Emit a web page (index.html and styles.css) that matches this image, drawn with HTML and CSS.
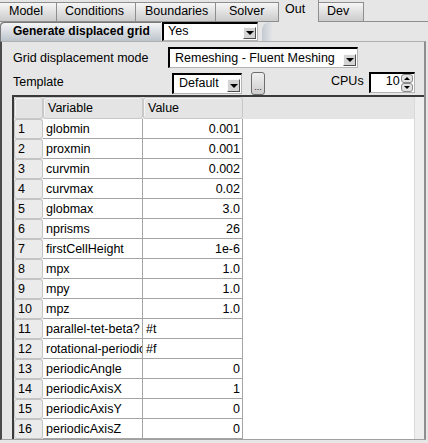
FILE: index.html
```html
<!DOCTYPE html>
<html>
<head>
<meta charset="utf-8">
<title>Out</title>
<link rel="stylesheet" href="styles.css">
</head>
<body>
<div class="tabs">
  <div class="tab t-model">Model</div>
  <div class="tab t-cond">Conditions</div>
  <div class="tab t-bound">Boundaries</div>
  <div class="tab t-solver">Solver</div>
  <div class="tab t-out sel">Out</div>
  <div class="tab t-dev">Dev</div>
  <div class="tab-fill"></div>
</div>
<div class="genrow">
  <div class="genlabel">Generate displaced grid</div>
  <div class="combo combo-yes"><span class="combo-text">Yes</span><span class="drop"></span></div>
  <div class="tabshade"></div>
</div>
<div class="panel">
  <div class="frow frow-mode">
    <span class="flabel lbl-mode">Grid displacement mode</span>
    <div class="combo combo-mode"><span class="combo-text">Remeshing - Fluent Meshing</span><span class="drop"></span></div>
  </div>
  <div class="frow frow-tpl">
    <span class="flabel lbl-tpl">Template</span>
    <div class="combo combo-tpl"><span class="combo-text">Default</span><span class="drop"></span></div>
    <div class="dots">...</div>
    <span class="cpus">CPUs</span>
    <div class="spin"><span class="spin-val">10</span><span class="spin-btns"><span class="spin-b spin-up"></span><span class="spin-b spin-down"></span></span></div>
  </div>
  <div class="tframe">
    <div class="grid">
      <div class="hc"></div><div class="hc">Variable</div><div class="hc">Value</div><div class="hfill"></div>
      <div class="rh">1</div><div class="dc">globmin</div><div class="dc num">0.001</div><div class="blank"></div>
      <div class="rh">2</div><div class="dc">proxmin</div><div class="dc num">0.001</div><div class="blank"></div>
      <div class="rh">3</div><div class="dc">curvmin</div><div class="dc num">0.002</div><div class="blank"></div>
      <div class="rh">4</div><div class="dc">curvmax</div><div class="dc num">0.02</div><div class="blank"></div>
      <div class="rh">5</div><div class="dc">globmax</div><div class="dc num">3.0</div><div class="blank"></div>
      <div class="rh">6</div><div class="dc">nprisms</div><div class="dc num">26</div><div class="blank"></div>
      <div class="rh">7</div><div class="dc">firstCellHeight</div><div class="dc num">1e-6</div><div class="blank"></div>
      <div class="rh">8</div><div class="dc">mpx</div><div class="dc num">1.0</div><div class="blank"></div>
      <div class="rh">9</div><div class="dc">mpy</div><div class="dc num">1.0</div><div class="blank"></div>
      <div class="rh">10</div><div class="dc">mpz</div><div class="dc num">1.0</div><div class="blank"></div>
      <div class="rh">11</div><div class="dc">parallel-tet-beta?</div><div class="dc flag">#t</div><div class="blank"></div>
      <div class="rh">12</div><div class="dc">rotational-periodic</div><div class="dc flag">#f</div><div class="blank"></div>
      <div class="rh">13</div><div class="dc">periodicAngle</div><div class="dc num">0</div><div class="blank"></div>
      <div class="rh">14</div><div class="dc">periodicAxisX</div><div class="dc num">1</div><div class="blank"></div>
      <div class="rh">15</div><div class="dc">periodicAxisY</div><div class="dc num">0</div><div class="blank"></div>
      <div class="rh">16</div><div class="dc">periodicAxisZ</div><div class="dc num">0</div><div class="blank"></div>
    </div>
    <div class="vstrip"></div>
  </div>
</div>
</body>
</html>
```

FILE: styles.css
```css
html, body {
  margin: 0;
  padding: 0;
}
body {
  width: 428px;
  height: 443px;
  overflow: hidden;
  background: #e6e6e6;
  font-family: "Liberation Sans", Arial, sans-serif;
  font-size: 12.5px;
  color: #000;
}

/* tabs */
.tabs {
  display: flex;
  align-items: flex-end;
  height: 22px;
}
.tab {
  box-sizing: border-box;
  height: 20px;
  border-top: 1px solid #8e8e8e;
  border-bottom: 1px solid #8e8e8e;
  border-right: 1px solid #8e8e8e;
  background: linear-gradient(#f6f6f6, #cbcbcb);
  line-height: 16px;
  white-space: nowrap;
}
.t-model { width: 57px; padding-left: 9px; }
.t-cond { width: 79px; padding-left: 8px; }
.t-bound { width: 80px; padding-left: 9px; }
.t-solver { width: 63px; padding-left: 13px; }
.t-out { width: 40px; padding-left: 6px; }
.t-dev { width: 45px; padding-left: 8px; }
.tab.sel {
  height: 22px;
  border-top: none;
  border-bottom: none;
  background: #e6e6e6;
  padding-top: 1px;
}
.tab-fill {
  flex: 1;
  box-sizing: border-box;
  height: 22px;
  border-bottom: 1px solid #8e8e8e;
}

/* generate row */
.genrow {
  display: flex;
  height: 19px;
}
.genlabel {
  box-sizing: border-box;
  width: 161px;
  height: 19px;
  padding-left: 13px;
  font-size: 12px;
  font-weight: bold;
  line-height: 18px;
  background: linear-gradient(#f7f8f9, #bcc3cb);
  border-top-left-radius: 4px;
  box-shadow: inset 1px 1px 0 #7a7a7a;
  white-space: nowrap;
}
.tabshade {
  margin-left: 4px;
  width: 10px;
  height: 19px;
  border-top-left-radius: 8px;
  background: linear-gradient(to right, #c3cad1, #e2e5e8);
}

/* combos */
.combo {
  box-sizing: border-box;
  display: flex;
  background: #fff;
  border-style: solid;
  border-width: 2px 1px 1px 2px;
  border-color: #000 #b4b4b4 #b4b4b4 #000;
  overflow: hidden;
}
.combo-text {
  flex: 1;
  padding-left: 5px;
  line-height: 16px;
  white-space: nowrap;
  overflow: hidden;
}
.drop {
  align-self: flex-end;
  box-sizing: border-box;
  width: 13px;
  height: 12px;
  margin: 0 1px 1px 0;
  background: #d4d4d4;
  border: 1px solid;
  border-color: #fafafa #4e4e4e #4e4e4e #fafafa;
  display: flex;
  align-items: center;
  justify-content: center;
}
.drop::after {
  content: "";
  border-left: 4px solid transparent;
  border-right: 4px solid transparent;
  border-top: 4px solid #000;
}
.combo-yes {
  margin-left: 1px;
  width: 96px;
  height: 19px;
}
.combo-yes .combo-text {
  padding-left: 4px;
  line-height: 14px;
}
.combo-mode {
  width: 190px;
  height: 21px;
}
.combo-mode .combo-text {
  padding-top: 1px;
}
.combo-tpl {
  width: 70px;
  height: 21px;
  margin-top: 1px;
}
.combo-tpl .drop {
  height: 13px;
}

/* panel */
.panel {
  box-sizing: border-box;
  width: 426px;
  border-top: 1px solid #b0b0b0;
  border-left: 2px solid #4a4a4a;
  border-right: 2px solid #8e8e8e;
  border-bottom: 1px solid #a0a0a0;
  padding-top: 5px;
}
.frow {
  display: flex;
  align-items: flex-start;
  padding-left: 11px;
}
.frow-mode {
  height: 21px;
}
.frow-tpl {
  height: 23px;
  margin-top: 4px;
}
.flabel {
  white-space: nowrap;
}
.lbl-mode {
  width: 155px;
  line-height: 20px;
  padding-top: 1px;
}
.lbl-tpl {
  width: 159px;
  line-height: 18px;
  padding-top: 1px;
}
.dots {
  box-sizing: border-box;
  margin-left: 9px;
  width: 14px;
  height: 23px;
  border: 1px solid #6e6e6e;
  border-radius: 3px;
  background: linear-gradient(#efefef, #cdcdcd);
  font-size: 9px;
  line-height: 9px;
  display: flex;
  align-items: flex-end;
  justify-content: center;
  padding-bottom: 2px;
  color: #222;
}
.cpus {
  margin-left: 66px;
  line-height: 18px;
}
.spin {
  box-sizing: border-box;
  display: flex;
  margin-left: 5px;
  width: 46px;
  height: 21px;
  background: #fff;
  border-style: solid;
  border-width: 2px 1px 1px 2px;
  border-color: #000 #b4b4b4 #b4b4b4 #000;
}
.spin-val {
  flex: 1;
  text-align: right;
  padding-right: 1px;
  line-height: 15px;
}
.spin-btns {
  width: 12px;
  display: flex;
  flex-direction: column;
  margin-right: 1px;
}
.spin-b {
  flex: 1;
  box-sizing: border-box;
  border: 1px solid #8a8a8a;
  border-radius: 3px;
  background: #e2e2e2;
  display: flex;
  align-items: center;
  justify-content: center;
}
.spin-up::after {
  content: "";
  border-left: 3px solid transparent;
  border-right: 3px solid transparent;
  border-bottom: 3px solid #000;
}
.spin-down::after {
  content: "";
  border-left: 3px solid transparent;
  border-right: 3px solid transparent;
  border-top: 3px solid #000;
}

/* table */
.tframe {
  display: flex;
  margin-left: 10px;
  border-top: 2px solid #3a3a3a;
  border-left: 2px solid #3a3a3a;
}
.grid {
  display: grid;
  grid-template-columns: 29px 100px 100px 171px;
  grid-template-rows: 22px repeat(16, 20px);
}
.hc {
  box-sizing: border-box;
  background: #e4e4e4;
  border: 1px solid #c8c8c8;
  border-radius: 3px;
  box-shadow: inset 1px 1px 0 #f4f4f4;
  line-height: 20px;
  padding-left: 4px;
}
.hfill {
  background: #e4e4e4;
}
.rh {
  box-sizing: border-box;
  background: #ebebeb;
  border: 1px solid #c4c4c4;
  border-radius: 3px;
  padding-left: 3px;
  line-height: 18px;
}
.dc {
  box-sizing: border-box;
  background: #fff;
  border-right: 1px solid #a4a4a4;
  border-bottom: 1px solid #a4a4a4;
  padding: 1px 0 0 3px;
  line-height: 18px;
  white-space: nowrap;
  overflow: hidden;
}
.dc.num {
  text-align: right;
  padding-left: 0;
  padding-right: 2px;
}
.dc.flag {
  padding-left: 3px;
}
.blank {
  background: #fff;
}
.vstrip {
  flex: 1;
  background: #eeeeee;
  border-left: 1px solid #dadada;
}
```
